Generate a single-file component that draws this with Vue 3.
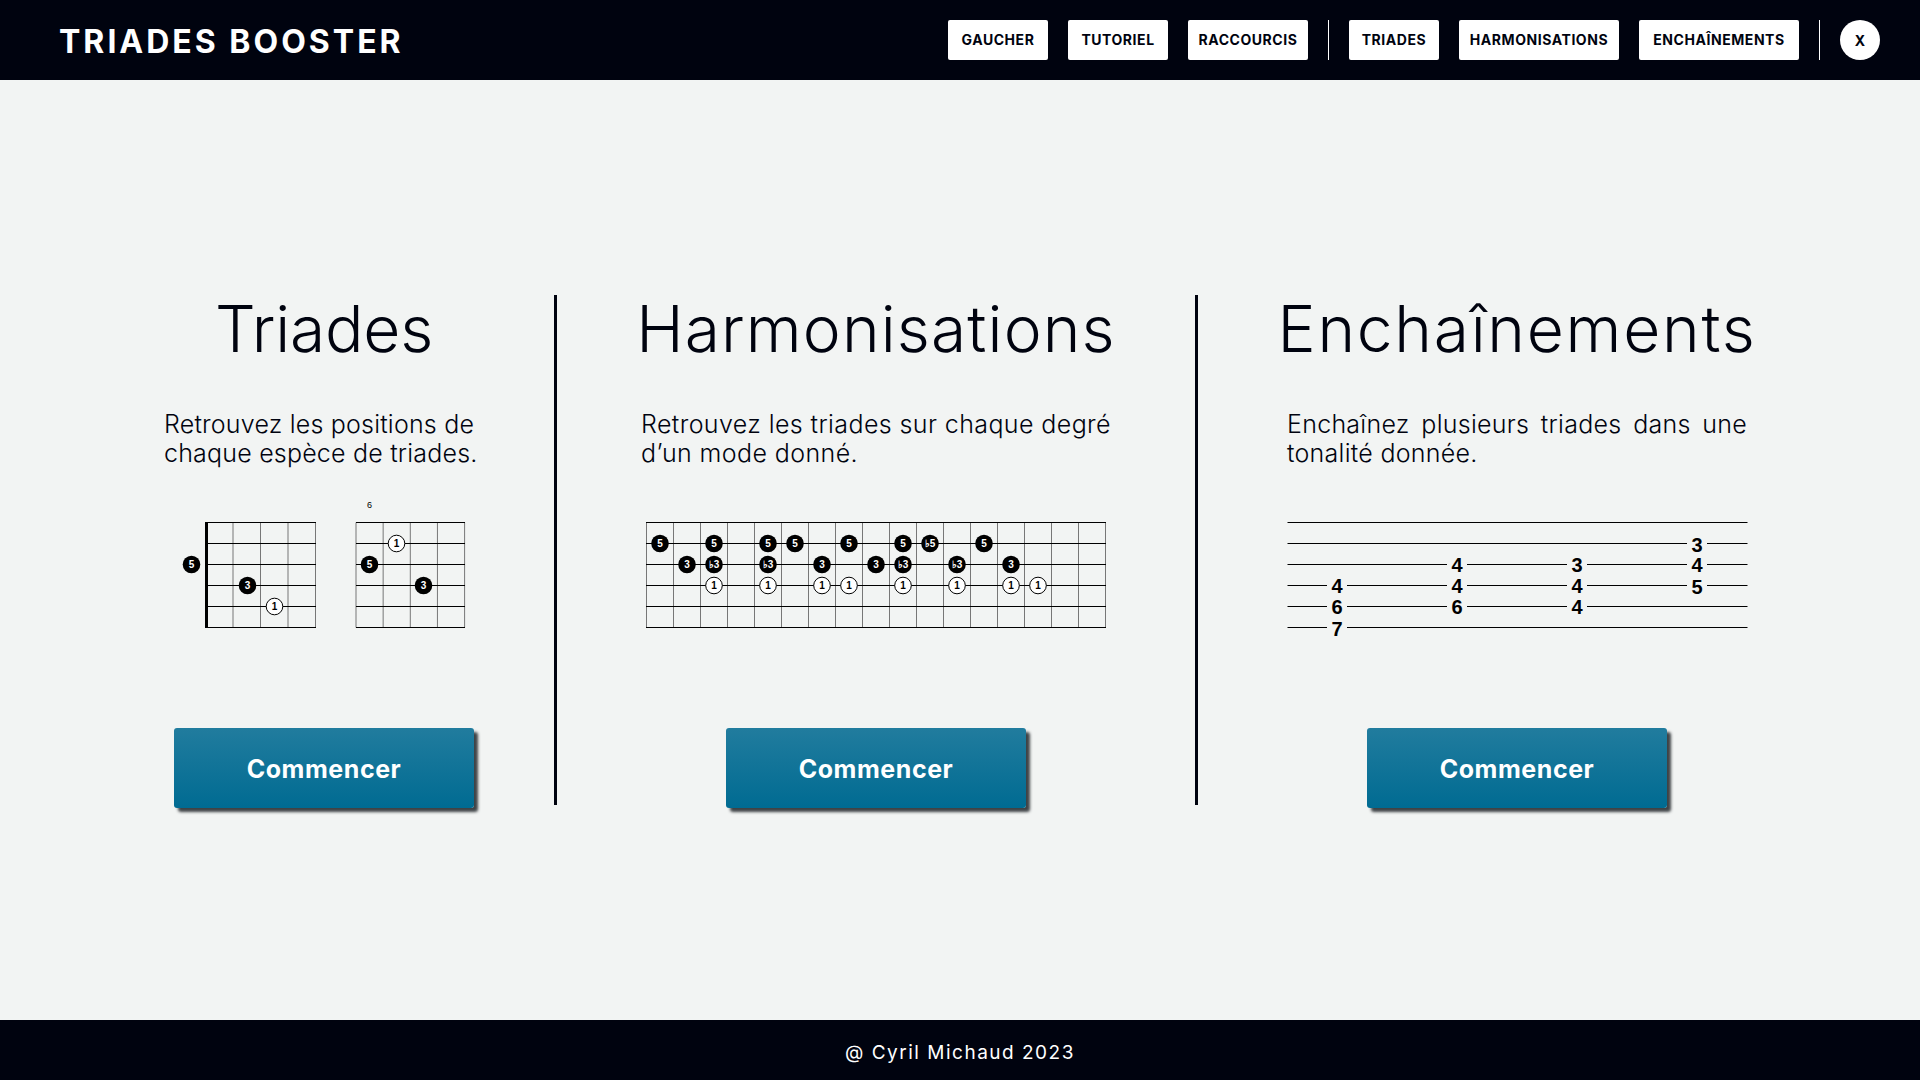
<template>
  <div class="page">
    <header class="topbar">
      <div class="brand">TRIADES BOOSTER</div>
      <nav class="nav">
        <template v-for="(group, i) in navGroups" :key="i">
          <button v-for="item in group" :key="item.label" class="nav-btn" :style="{ width: item.width + 'px' }">
            {{ item.label }}
          </button>
          <span class="nav-sep"></span>
        </template>
        <button class="nav-close">X</button>
      </nav>
    </header>

    <main class="main">
      <section class="col col-triades">
        <h2 class="col-title title-triades">Triades</h2>
        <p class="col-text text-triades">Retrouvez les positions de<br>chaque espèce de triades.</p>
        <svg class="figure" width="462" height="150" viewBox="93 490 462 150">
          <line v-for="x in grid(205.5, 4, 27.5)" :key="'a' + x" :x1="x" :x2="x" y1="522.5" y2="627.5" class="fret" />
          <line v-for="x in grid(356, 4, 27.15)" :key="'b' + x" :x1="x" :x2="x" y1="522.5" y2="627.5" class="fret" />
          <line v-for="y in strings" :key="'c' + y" x1="205.5" x2="316" :y1="y" :y2="y" class="string" />
          <line v-for="y in strings" :key="'d' + y" x1="356" x2="465" :y1="y" :y2="y" class="string" />
          <rect x="205" y="522" width="3" height="106" fill="#000" />
          <text x="369.5" y="508" class="fret-no">6</text>
          <g v-for="d in chordDots" :key="d.x + '-' + d.y">
            <circle :cx="d.x" :cy="d.y" :r="d.root ? 8.8 : 8.3" :class="d.root ? 'dot-root' : 'dot'" />
            <text :x="d.x" :y="d.y + 3.6" :class="d.root ? 'dot-label-root' : 'dot-label'">{{ d.label }}</text>
          </g>
        </svg>
        <button class="start-btn">Commencer</button>
      </section>

      <span class="divider first"></span>

      <section class="col col-harmo">
        <h2 class="col-title title-harmo">Harmonisations</h2>
        <p class="col-text text-harmo">Retrouvez les triades sur chaque degré<br>d’un mode donné.</p>
        <svg class="figure" width="638" height="150" viewBox="557 490 638 150">
          <line v-for="x in grid(646.5, 17, 27)" :key="'e' + x" :x1="x" :x2="x" y1="522.5" y2="627.5" class="fret" />
          <line v-for="y in strings" :key="'f' + y" x1="646" x2="1106" :y1="y" :y2="y" class="string" />
          <g v-for="d in scaleDots" :key="d.x + '-' + d.y">
            <circle :cx="d.x" :cy="d.y" :r="d.root ? 8.8 : 8.3" :class="d.root ? 'dot-root' : 'dot'" />
            <text :x="d.x" :y="d.y + 3.6" :class="d.root ? 'dot-label-root' : 'dot-label'">{{ d.label }}</text>
          </g>
        </svg>
        <button class="start-btn">Commencer</button>
      </section>

      <span class="divider"></span>

      <section class="col col-chain">
        <h2 class="col-title title-chain">Enchaînements</h2>
        <p class="col-text text-chain">Enchaînez plusieurs triades dans une tonalité donnée.</p>
        <svg class="figure" width="638" height="150" viewBox="1198 490 638 150">
          <line v-for="y in strings" :key="'g' + y" x1="1287.5" x2="1747.5" :y1="y" :y2="y" class="string" />
          <g v-for="n in tabNotes" :key="n.x + '-' + n.y">
            <rect :x="n.x - 10" :y="n.y - 8" width="20" height="16" fill="#f2f4f3" />
            <text :x="n.x" :y="n.y + 8" class="tab-note">{{ n.label }}</text>
          </g>
        </svg>
        <button class="start-btn">Commencer</button>
      </section>
    </main>

    <footer class="footer">@ Cyril Michaud 2023</footer>
  </div>
</template>

<script setup>
const navGroups = [
  [
    { label: 'GAUCHER', width: 100 },
    { label: 'TUTORIEL', width: 100 },
    { label: 'RACCOURCIS', width: 120 }
  ],
  [
    { label: 'TRIADES', width: 90 },
    { label: 'HARMONISATIONS', width: 160 },
    { label: 'ENCHAÎNEMENTS', width: 160 }
  ]
]

const strings = [522.5, 543.5, 564.5, 585.5, 606.5, 627.5]
const grid = (start, cells, step) => Array.from({ length: cells + 1 }, (_, i) => start + i * step)

const chordDots = [
  { x: 191.5, y: 564.5, label: '5', root: true },
  { x: 247.5, y: 585.5, label: '3', root: true },
  { x: 274.5, y: 606.5, label: '1' },
  { x: 396.5, y: 543.5, label: '1' },
  { x: 369.5, y: 564.5, label: '5', root: true },
  { x: 423.5, y: 585.5, label: '3', root: true }
]

// fret cell index per string, from the reference diagram
const cellX = (i) => 660 + i * 27
const scaleDots = [
  ...[[0, '5'], [2, '5'], [4, '5'], [5, '5'], [7, '5'], [9, '5'], [10, '♭5'], [12, '5']]
    .map(([i, label]) => ({ x: cellX(i), y: 543.5, label, root: true })),
  ...[[1, '3'], [2, '♭3'], [4, '♭3'], [6, '3'], [8, '3'], [9, '♭3'], [11, '♭3'], [13, '3']]
    .map(([i, label]) => ({ x: cellX(i), y: 564.5, label, root: true })),
  ...[2, 4, 6, 7, 9, 11, 13, 14].map((i) => ({ x: cellX(i), y: 585.5, label: '1' }))
]

const tabNotes = [
  { x: 1697, y: 543.5, label: '3' },
  { x: 1457, y: 563.5, label: '4' },
  { x: 1577, y: 563.5, label: '3' },
  { x: 1697, y: 563.5, label: '4' },
  { x: 1337, y: 584.5, label: '4' },
  { x: 1457, y: 584.5, label: '4' },
  { x: 1577, y: 584.5, label: '4' },
  { x: 1697, y: 585.5, label: '5' },
  { x: 1337, y: 605.5, label: '6' },
  { x: 1457, y: 605.5, label: '6' },
  { x: 1577, y: 605.5, label: '4' },
  { x: 1337, y: 627.5, label: '7' }
]
</script>

<style>
html, body {
  margin: 0;
  background: #f2f4f3;
}
</style>

<style scoped>
.page {
  width: 1920px;
  height: 1080px;
  display: flex;
  flex-direction: column;
  background: #f2f4f3;
  font-family: Inter, "Liberation Sans", sans-serif;
  color: #00030f;
  overflow: hidden;
}

.topbar {
  height: 80px;
  flex: none;
  display: flex;
  align-items: center;
  justify-content: space-between;
  padding: 0 40px 0 59px;
  background: #00030f;
}

.brand {
  padding-top: 2px;
  color: #fff;
  font-size: 32px;
  font-weight: 700;
  letter-spacing: 3px;
}

.nav {
  display: flex;
  align-items: center;
  gap: 20px;
}

.nav-btn {
  height: 40px;
  padding: 0 0 2px;
  border: none;
  border-radius: 2px;
  background: #fff;
  color: #00030f;
  font-family: inherit;
  font-size: 14px;
  font-weight: 700;
  letter-spacing: 0.55px;
}

.nav-sep {
  width: 1px;
  height: 40px;
  background: #fff;
}

.nav-close {
  width: 40px;
  height: 40px;
  padding: 0;
  border: none;
  border-radius: 50%;
  background: #fff;
  color: #00030f;
  font-family: inherit;
  font-size: 14px;
  font-weight: 700;
}

.main {
  flex: 1;
  display: flex;
  align-items: center;
  padding-left: 93px;
}

.col {
  height: 510px;
  display: flex;
  flex-direction: column;
  align-items: center;
}

.col-triades {
  width: 462px;
}

.col-harmo,
.col-chain {
  width: 638px;
}

.divider {
  flex: none;
  width: 3px;
  height: 510px;
  background: #00030f;
}

.divider.first {
  margin-left: -1px;
}

.col-title {
  margin: 0;
  height: 66px;
  line-height: 68px;
  font-size: 64px;
  font-weight: 300;
  white-space: nowrap;
}

.title-triades {
  letter-spacing: -0.2px;
}

.title-harmo {
  letter-spacing: 1.15px;
}

.title-chain {
  letter-spacing: 1.75px;
}

.col-text {
  margin: 49px 0 0;
  height: 58px;
  font-size: 25px;
  line-height: 29.4px;
  font-weight: 300;
  letter-spacing: 0.27px;
}

.text-triades {
  width: 320px;
  letter-spacing: 0.2px;
}

.text-harmo {
  width: 470px;
  letter-spacing: 0.4px;
}

.text-chain {
  width: 460px;
  text-align: justify;
}

.figure {
  flex: none;
  margin-top: 22px;
}

.fret {
  stroke: #777;
  stroke-width: 1;
}

.string {
  stroke: #000;
  stroke-width: 1;
}

.dot-root {
  fill: #000;
}

.dot {
  fill: #fff;
  stroke: #000;
  stroke-width: 1;
}

.dot-label-root,
.dot-label,
.fret-no,
.tab-note {
  font-family: "Liberation Sans", sans-serif;
  text-anchor: middle;
  font-weight: 700;
}

.dot-label-root {
  fill: #fff;
  font-size: 10px;
}

.dot-label {
  fill: #000;
  font-size: 10px;
}

.fret-no {
  font-size: 9px;
  font-weight: 400;
}

.tab-note {
  font-size: 20px;
  fill: #000;
}

.start-btn {
  flex: none;
  width: 300px;
  height: 80px;
  margin-top: 88px;
  padding: 2px 0 0;
  border: none;
  border-radius: 3px;
  background: linear-gradient(180deg, #217c9e, #006b92);
  box-shadow: 4px 4px 3px #3f4346;
  color: #fff;
  font-family: inherit;
  font-size: 25px;
  font-weight: 700;
  letter-spacing: 0.55px;
}

.footer {
  height: 60px;
  flex: none;
  display: flex;
  align-items: center;
  justify-content: center;
  box-sizing: border-box;
  padding-top: 4px;
  background: #00030f;
  color: #fff;
  font-size: 19px;
  letter-spacing: 1.5px;
}
</style>
